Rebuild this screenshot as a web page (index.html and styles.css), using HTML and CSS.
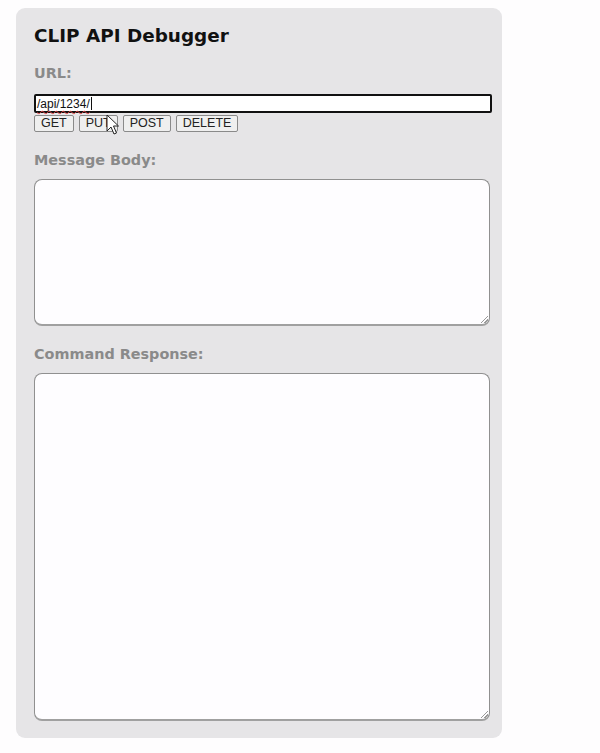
FILE: index.html
```html
<!DOCTYPE html>
<html>
<head>
<meta charset="utf-8">
<link rel="stylesheet" href="styles.css">
</head>
<body>
<div class="panel">
  <h2 class="title">CLIP API Debugger</h2>
  <div class="label">URL:</div>
  <div class="url-row">
    <div class="url-input"><span class="url-text">/api/1234/</span><span class="caret"></span></div>
    <svg class="cursor" width="14" height="22" viewBox="0 0 14 22"><path d="M1 1 L1 17 L5 13 L8 20 L10.5 19 L7.5 12 L12.5 12 Z" fill="#fff" stroke="#222" stroke-width="1" stroke-linejoin="round"/></svg>
  </div>
  <div class="buttons">
    <span class="btn">GET</span>
    <span class="btn">PUT</span>
    <span class="btn">POST</span>
    <span class="btn">DELETE</span>
  </div>
  <div class="label label-body">Message Body:</div>
  <div class="area area-body"><span class="grip"></span></div>
  <div class="label label-resp">Command Response:</div>
  <div class="area area-resp"><span class="grip"></span></div>
</div>
</body>
</html>
```
FILE: styles.css
```css
html, body { margin: 0; padding: 0; background: #fefdfe; }
body { padding: 8px 0 0 16px; font-family: "DejaVu Sans", Verdana, sans-serif; }
.panel {
  width: 486px;
  height: 730px;
  box-sizing: border-box;
  background: #e6e5e7;
  border-radius: 9px;
  padding: 16px 0 0 18px;
}
.title {
  margin: 0;
  font-size: 18.4px;
  font-weight: bold;
  color: #111;
  line-height: 24px;
}
.label {
  color: #8a8a8a;
  font-weight: bold;
  font-size: 14.4px;
  line-height: 18px;
  margin-top: 16px;
}
.url-row { position: relative; margin-top: 12px; }
.url-input {
  width: 458px;
  height: 19px;
  box-sizing: border-box;
  border: 2px solid #111;
  border-radius: 2px;
  background: #fff;
  display: flex;
  align-items: center;
  padding-left: 1px;
  font-family: "Liberation Sans", Arial, sans-serif;
  font-size: 12px;
  color: #111;
}
.url-text { text-decoration: underline wavy #e04040 1px; text-decoration-skip-ink: none; text-underline-offset: 2px; }
.caret { display: inline-block; width: 1px; height: 13px; background: #111; margin-left: 1px; }
.cursor { position: absolute; left: 72px; top: 20px; }
.buttons { display: flex; gap: 5px; margin-top: 2px; }
.btn {
  height: 17px;
  box-sizing: border-box;
  border: 1px solid #8a8a8a;
  border-radius: 2px;
  background: #efefef;
  font-family: "Liberation Sans", Arial, sans-serif;
  font-size: 12.5px;
  line-height: 15px;
  color: #222;
  padding: 0 6px;
}
.label-body { margin-top: 19px; }
.label-resp { margin-top: 19px; }
.area {
  position: relative;
  width: 456px;
  box-sizing: border-box;
  background: #fefdff;
  border: 1px solid #909090;
  border-bottom: 2px solid #a0a0a0;
  border-radius: 8px;
  margin-top: 10px;
}
.area-body { height: 147px; }
.area-resp { height: 348px; }
.grip {
  position: absolute;
  right: 1px;
  bottom: 1px;
  width: 7px;
  height: 7px;
  background: linear-gradient(135deg, transparent 45%, #999 45%, #999 55%, transparent 55%, transparent 70%, #999 70%, #999 80%, transparent 80%);
}
```
